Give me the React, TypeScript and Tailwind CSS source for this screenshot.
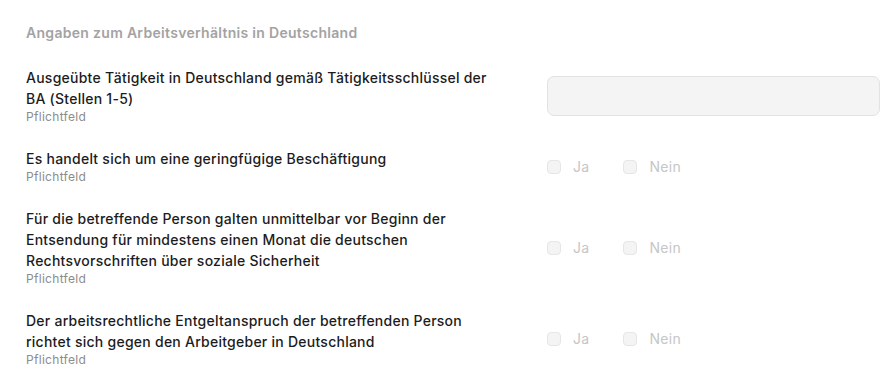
import React from 'react';

type Field = {
  label: string;
  kind: 'text' | 'yesno';
};

const fields: Field[] = [
  {
    label: 'Ausgeübte Tätigkeit in Deutschland gemäß Tätigkeitsschlüssel der BA (Stellen 1-5)',
    kind: 'text',
  },
  { label: 'Es handelt sich um eine geringfügige Beschäftigung', kind: 'yesno' },
  {
    label:
      'Für die betreffende Person galten unmittelbar vor Beginn der Entsendung für mindestens einen Monat die deutschen Rechtsvorschriften über soziale Sicherheit',
    kind: 'yesno',
  },
  {
    label:
      'Der arbeitsrechtliche Entgeltanspruch der betreffenden Person richtet sich gegen den Arbeitgeber in Deutschland',
    kind: 'yesno',
  },
];

const Checkbox = ({ label }: { label: string }) => (
  <label className="flex items-center gap-[12px]">
    <span className="h-[14px] w-[14px] rounded-[4px] border border-[#e6e6e6] bg-[#f4f4f4]" />
    <span className="text-[14px] leading-[20px] tracking-[0.3px] text-[#c6c6c6]">{label}</span>
  </label>
);

const Row = ({ field }: { field: Field }) => (
  <div className="flex items-center">
    <div className="w-[476px]">
      <div className="text-[14px] font-medium leading-[21px] tracking-[0.25px] text-[#1c1c1c]">
        {field.label}
      </div>
      <div className="text-[12px] leading-[16px] tracking-[0.3px] text-[#8c8c8c]">Pflichtfeld</div>
    </div>
    <div className="ml-auto w-[333px]">
      {field.kind === 'text' ? (
        <input
          disabled
          className="block h-[40px] w-full rounded-[7px] border border-[#e2e2e2] bg-[#f4f4f4] px-3"
        />
      ) : (
        <div className="flex items-center gap-[34px]">
          <Checkbox label="Ja" />
          <Checkbox label="Nein" />
        </div>
      )}
    </div>
  </div>
);

export default function App() {
  return (
    <div
      className="min-h-screen bg-white pl-[26px] pr-[10px] pt-[24px]"
      style={{ fontFamily: 'Inter, "Noto Sans", sans-serif' }}
    >
      <h2 className="text-[14px] font-semibold leading-[18px] tracking-[0.3px] text-[#a3a3a3]">
        Angaben zum Arbeitsverhältnis in Deutschland
      </h2>
      <div className="mt-[25px] flex flex-col gap-[23px]">
        {fields.map((f, i) => (
          <Row key={i} field={f} />
        ))}
      </div>
    </div>
  );
}
